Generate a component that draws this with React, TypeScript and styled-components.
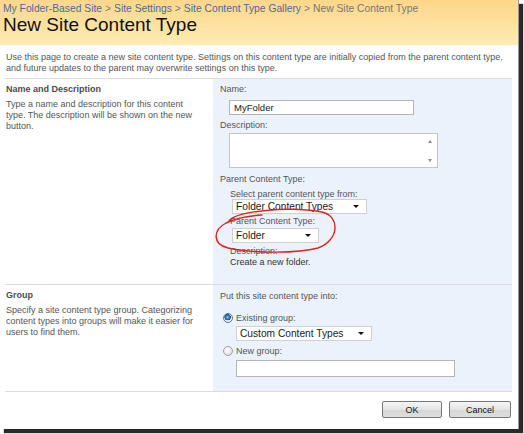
import React from 'react';
import styled, { createGlobalStyle } from 'styled-components';

const GlobalStyle = createGlobalStyle`
  html, body {
    margin: 0;
    padding: 0;
    background: #fff;
  }
  body {
    width: 524px;
    height: 434px;
    overflow: hidden;
    font-family: "Liberation Sans", Arial, sans-serif;
  }
`;

const Frame = styled.div`
  position: relative;
  width: 519px;
  height: 429px;
  background: #fff;
  border-right: 1px solid #9a9a9a;
  box-sizing: border-box;
  box-shadow: 4px 4px 1px #2a2a2a;
  overflow: hidden;
`;

const Header = styled.header`
  height: 45px;
  box-sizing: border-box;
  padding: 3px 0 0 3px;
  background: linear-gradient(#fdd68a, #feebb4);
`;

const Breadcrumb = styled.div`
  font-size: 10.3px;
  line-height: 11px;
  color: #777;
  white-space: nowrap;
`;

const Crumb = styled.a`
  color: #4b6b9c;
  text-decoration: none;
`;

const Sep = styled.span`
  margin: 0 3px;
  color: #7a7a7a;
`;

const Title = styled.h1`
  margin: 0;
  font-size: 19px;
  font-weight: normal;
  line-height: 22px;
  color: #111;
`;

const Intro = styled.p`
  margin: 0;
  padding: 7px 8px 4px 6px;
  font-size: 9px;
  line-height: 11px;
  color: #555;
`;

const Form = styled.div`
  width: 507px;
  margin-left: 5px;
`;

const Section = styled.div<{ $last?: boolean }>`
  display: grid;
  grid-template-columns: 208px 299px;
  border-top: 1px solid #dcdcdc;
  border-bottom: ${(p) => (p.$last ? '1px solid #dcdcdc' : 'none')};
`;

const Info = styled.div`
  padding: 5px 16px 0 1px;
`;

const InfoTitle = styled.div`
  font-size: 9px;
  font-weight: bold;
  line-height: 11px;
  color: #4c4c4c;
`;

const InfoText = styled.div`
  margin-top: 4px;
  font-size: 9px;
  line-height: 11px;
  color: #555;
`;

const Panel = styled.div<{ $height: number }>`
  height: ${(p) => p.$height}px;
  box-sizing: border-box;
  padding: 5px 0 0 7px;
  background: #ecf2fc;
  display: flex;
  flex-direction: column;
  align-items: flex-start;
`;

const Label = styled.div<{ $mt?: number }>`
  margin-top: ${(p) => p.$mt ?? 0}px;
  font-size: 9px;
  line-height: 11px;
  color: #555;
  white-space: nowrap;
`;

const SubGroup = styled.div`
  margin-left: 10px;
  display: flex;
  flex-direction: column;
  align-items: flex-start;
`;

const SubLabel = styled.div<{ $mt?: number; $dark?: boolean }>`
  margin-top: ${(p) => p.$mt ?? 0}px;
  font-size: 9px;
  line-height: 10px;
  color: ${(p) => (p.$dark ? '#333' : '#555')};
  white-space: nowrap;
`;

const TextBox = styled.div<{ $w: number; $h: number; $mt: number; $ml: number }>`
  width: ${(p) => p.$w}px;
  height: ${(p) => p.$h}px;
  margin: ${(p) => p.$mt}px 0 0 ${(p) => p.$ml}px;
  box-sizing: border-box;
  border: 1px solid #b5b5b5;
  background: #fff;
  padding-left: 4px;
  font-size: 9.5px;
  line-height: 13px;
  color: #222;
`;

const AreaBox = styled.div`
  position: relative;
  width: 209px;
  height: 35px;
  margin: 2px 0 0 9px;
  box-sizing: border-box;
  border: 1px solid #c4c4c4;
  background: #fff;
`;

const ScrollArrow = styled.span<{ $down?: boolean }>`
  position: absolute;
  right: 5px;
  ${(p) => (p.$down ? 'bottom: 5px;' : 'top: 6px;')}
  width: 0;
  height: 0;
  border-left: 2.5px solid transparent;
  border-right: 2.5px solid transparent;
  ${(p) => (p.$down ? 'border-top: 3px solid #8a8a8a;' : 'border-bottom: 3px solid #8a8a8a;')}
`;

const SelectBox = styled.div<{ $w: number; $mt: number; $ml: number }>`
  position: relative;
  width: ${(p) => p.$w}px;
  height: 15px;
  margin: ${(p) => p.$mt}px 0 0 ${(p) => p.$ml}px;
  box-sizing: border-box;
  border: 1px solid #d0d0d0;
  background: #fff;
  padding-left: 3px;
  font-size: 10.2px;
  line-height: 13px;
  color: #1a1a1a;
  white-space: nowrap;
`;

const SelectArrow = styled.span`
  position: absolute;
  right: 7px;
  top: 5px;
  width: 0;
  height: 0;
  border-left: 3px solid transparent;
  border-right: 3px solid transparent;
  border-top: 3px solid #111;
`;

const RadioRow = styled.div<{ $mt: number }>`
  display: flex;
  align-items: center;
  gap: 3px;
  margin: ${(p) => p.$mt}px 0 0 3px;
  font-size: 9px;
  line-height: 10px;
  color: #555;
`;

const Radio = styled.span<{ $checked?: boolean }>`
  width: 10px;
  height: 10px;
  box-sizing: border-box;
  border-radius: 50%;
  border: 1px solid ${(p) => (p.$checked ? '#5b7896' : '#a0a0a0')};
  background: ${(p) =>
    p.$checked
      ? 'radial-gradient(circle at 45% 40%, #8fd0f5 0, #1e6fb0 2.2px, #1a4f82 3px, #e8eef4 3.4px, #f4f6f8 100%)'
      : 'radial-gradient(circle at 40% 35%, #ffffff 0, #e6e6e6 60%, #cfcfcf 100%)'};
`;

const Footer = styled.div`
  display: flex;
  justify-content: flex-end;
  gap: 7px;
  padding: 9px 1px 0 0;
`;

const Button = styled.button<{ $w: number }>`
  width: ${(p) => p.$w}px;
  height: 17px;
  padding: 0;
  border: 1px solid #777;
  border-radius: 2px;
  background: linear-gradient(#f6f6f6, #e4e4e4 50%, #d6d6d6 51%, #dedede);
  font-family: "Liberation Sans", Arial, sans-serif;
  font-size: 9px;
  color: #111;
`;

const Annotation = styled.svg`
  position: absolute;
  left: 0;
  top: 0;
  pointer-events: none;
`;

const App: React.FC = () => {
  return (
    <>
      <GlobalStyle />
      <Frame>
        <Header>
          <Breadcrumb>
            <Crumb href="#">My Folder-Based Site</Crumb>
            <Sep>&gt;</Sep>
            <Crumb href="#">Site Settings</Crumb>
            <Sep>&gt;</Sep>
            <Crumb href="#">Site Content Type Gallery</Crumb>
            <Sep>&gt;</Sep>
            New Site Content Type
          </Breadcrumb>
          <Title>New Site Content Type</Title>
        </Header>
        <Intro>
          Use this page to create a new site content type. Settings on this content type are initially copied
          from the parent content type, and future updates to the parent may overwrite settings on this type.
        </Intro>
        <Form>
          <Section>
            <Info>
              <InfoTitle>Name and Description</InfoTitle>
              <InfoText>
                Type a name and description for this content type. The description will be shown on the new
                button.
              </InfoText>
            </Info>
            <Panel $height={205}>
              <Label>Name:</Label>
              <TextBox $w={185} $h={15} $mt={5} $ml={9}>
                MyFolder
              </TextBox>
              <Label $mt={5}>Description:</Label>
              <AreaBox>
                <ScrollArrow />
                <ScrollArrow $down />
              </AreaBox>
              <Label $mt={6}>Parent Content Type:</Label>
              <SubGroup>
                <SubLabel $mt={4}>Select parent content type from:</SubLabel>
                <SelectBox $w={135} $mt={0} $ml={2}>
                  Folder Content Types
                  <SelectArrow />
                </SelectBox>
                <SubLabel $mt={2}>Parent Content Type:</SubLabel>
                <SelectBox $w={87} $mt={2} $ml={2}>
                  Folder
                  <SelectArrow />
                </SelectBox>
                <SubLabel $mt={3}>Description:</SubLabel>
                <SubLabel $mt={1} $dark>
                  Create a new folder.
                </SubLabel>
              </SubGroup>
            </Panel>
          </Section>
          <Section $last>
            <Info>
              <InfoTitle>Group</InfoTitle>
              <InfoText>
                Specify a site content type group. Categorizing content types into groups will make it easier for
                users to find them.
              </InfoText>
            </Info>
            <Panel $height={106}>
              <Label $mt={1}>Put this site content type into:</Label>
              <RadioRow $mt={11}>
                <Radio $checked />
                Existing group:
              </RadioRow>
              <SelectBox $w={136} $mt={3} $ml={16}>
                Custom Content Types
                <SelectArrow />
              </SelectBox>
              <RadioRow $mt={5}>
                <Radio />
                New group:
              </RadioRow>
              <TextBox $w={219} $h={17} $mt={4} $ml={16} />
            </Panel>
          </Section>
          <Footer>
            <Button $w={60}>OK</Button>
            <Button $w={62}>Cancel</Button>
          </Footer>
        </Form>
        <Annotation width="519" height="429" viewBox="0 0 519 429">
          <path
            d="M 229 221 C 236 211, 290 206, 322 212 C 340 216, 340 240, 318 248 C 296 254, 250 253, 228 248 C 212 244, 213 230, 226 223 C 236 218, 248 216, 262 215"
            fill="none"
            stroke="#e0231c"
            strokeWidth="1.4"
            strokeLinecap="round"
          />
        </Annotation>
      </Frame>
    </>
  );
};

export default App;
